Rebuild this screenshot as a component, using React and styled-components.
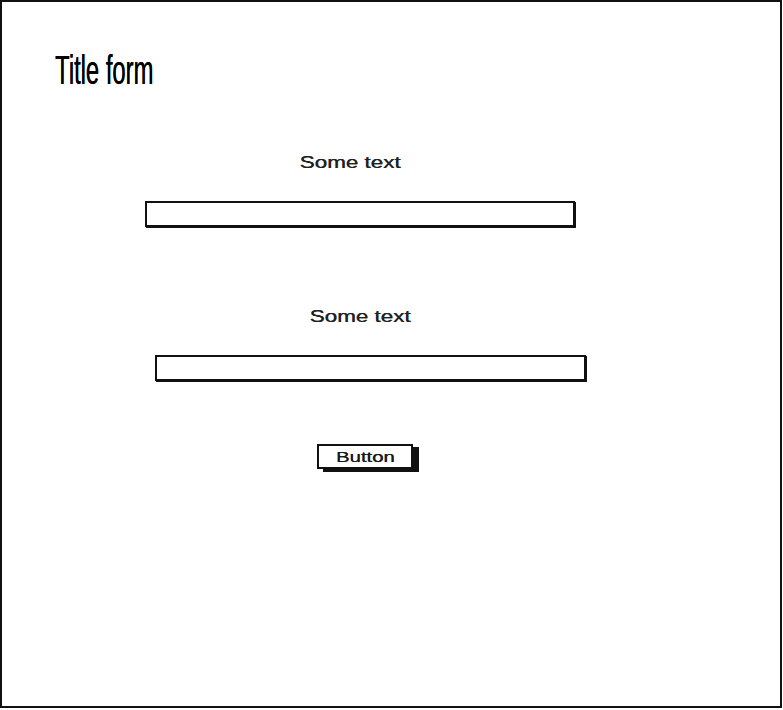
import styled, { createGlobalStyle } from 'styled-components'

const GlobalStyle = createGlobalStyle`
  html, body {
    margin: 0;
    padding: 0;
    background: #ffffff;
  }
  * {
    box-sizing: border-box;
  }
`

const Frame = styled.div`
  width: 782px;
  height: 708px;
  border: 2px solid #111;
  background: #fff;
  display: flex;
  flex-direction: column;
  align-items: flex-start;
  font-family: "Liberation Sans", Arial, sans-serif;
`

const Title = styled.h1`
  margin: 48px 0 0 53px;
  font-size: 41px;
  line-height: 41px;
  font-weight: 400;
  color: #000;
  white-space: nowrap;
  transform: scaleX(0.58);
  transform-origin: left center;
  text-shadow: 0.4px 0 0 #000;
`

const Field = styled.div`
  display: flex;
  flex-direction: column;
  align-items: center;
  gap: 30px;
  width: ${(p) => p.$width}px;
  margin-top: ${(p) => p.$top}px;
  margin-left: ${(p) => p.$left}px;
`

const Label = styled.label`
  display: inline-block;
  font-size: 16px;
  line-height: 16px;
  color: #222;
  white-space: nowrap;
  transform: translateX(-10px) scaleX(1.4);
  text-shadow: 0.3px 0 0 #222;
`

const Input = styled.input`
  width: 100%;
  height: 26px;
  border: 2px solid #111;
  box-shadow: 1px 1px 0 #111;
  outline: none;
  background: #fff;
  padding: 0 6px;
`

const Button = styled.button`
  margin-top: 63px;
  margin-left: 315px;
  width: 96px;
  height: 25px;
  border: 2px solid #111;
  box-shadow: 6px 3px 0 #111;
  background: #fff;
  padding: 0;
  display: flex;
  align-items: center;
  justify-content: center;
  cursor: pointer;
`

const ButtonText = styled.span`
  display: inline-block;
  font-family: "Liberation Sans", Arial, sans-serif;
  font-size: 14px;
  line-height: 14px;
  color: #1a1a1a;
  transform: scaleX(1.45);
  text-shadow: 0.3px 0 0 #1a1a1a;
`

export default function App() {
  return (
    <>
      <GlobalStyle />
      <Frame>
        <Title>Title form</Title>

        <Field $top={64} $left={143} $width={430}>
          <Label>Some text</Label>
          <Input type="text" />
        </Field>

        <Field $top={82} $left={153} $width={431}>
          <Label>Some text</Label>
          <Input type="text" />
        </Field>

        <Button type="button">
          <ButtonText>Button</ButtonText>
        </Button>
      </Frame>
    </>
  )
}
